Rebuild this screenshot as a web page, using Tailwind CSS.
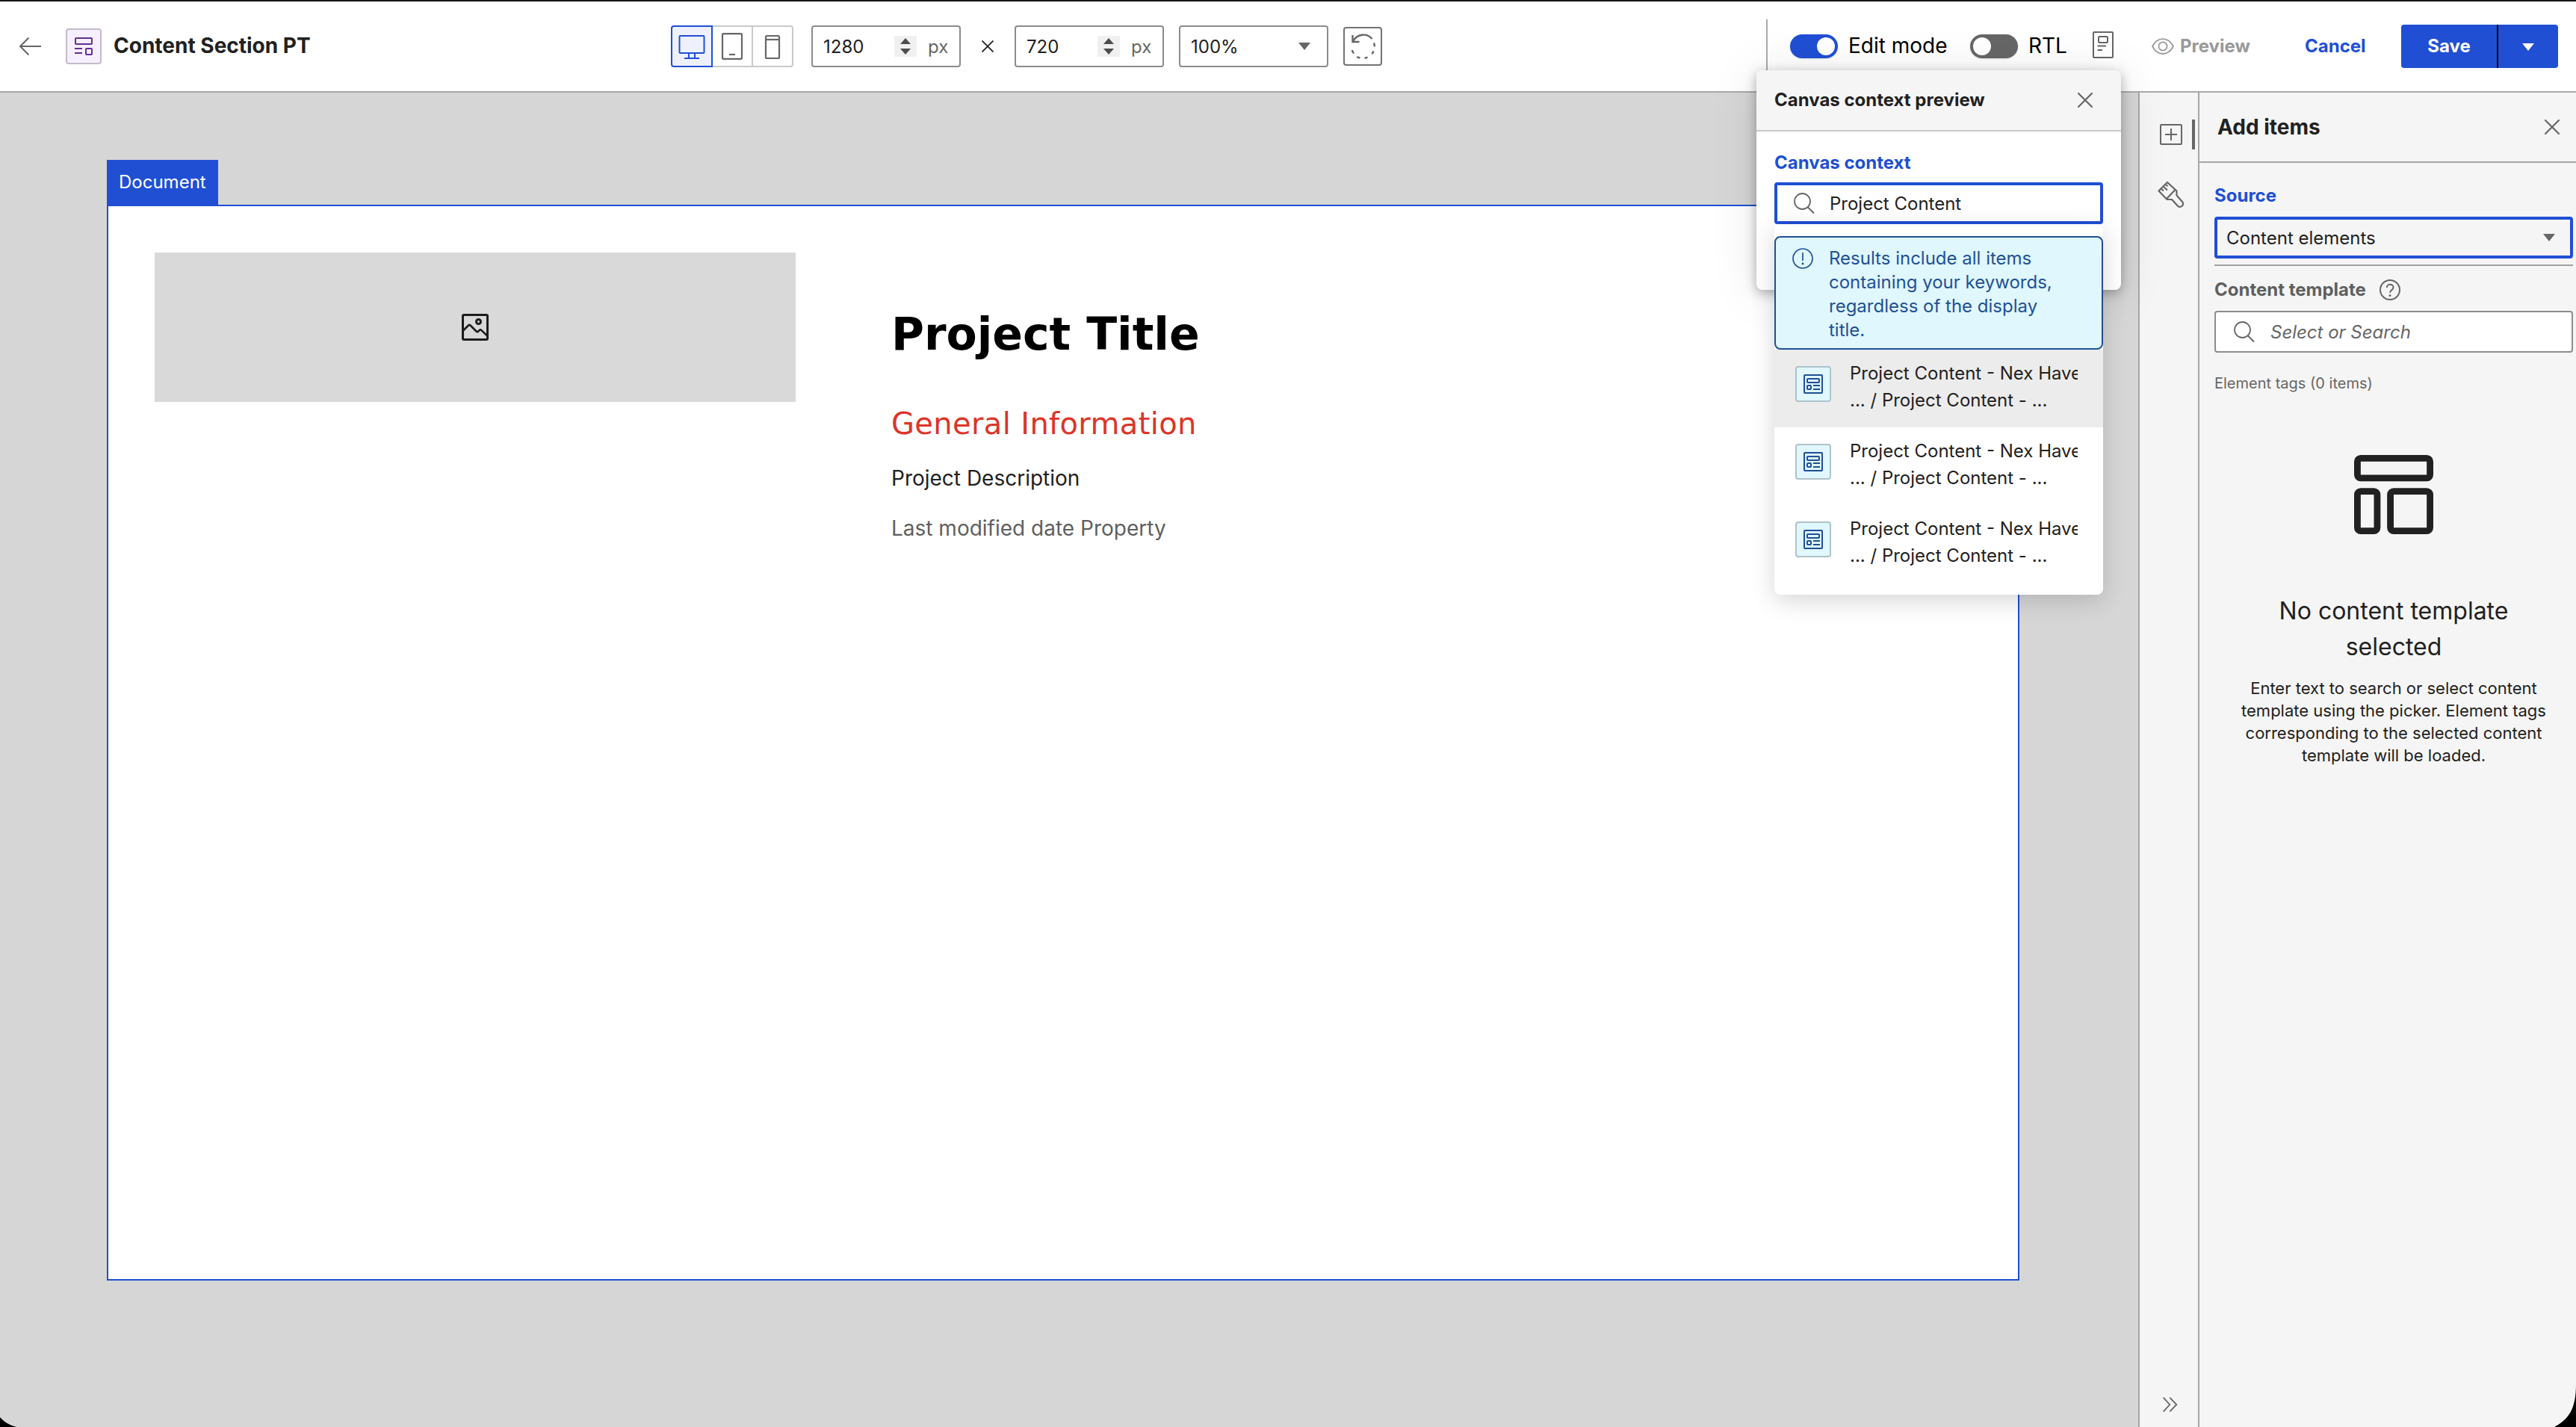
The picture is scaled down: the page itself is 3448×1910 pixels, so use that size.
<!DOCTYPE html>
<html lang="en">
<head>
    <meta charset="UTF-8">
    <meta name="viewport" content="width=device-width, initial-scale=1.0">
    <title>Content Section PT</title>
    <script src="https://cdn.jsdelivr.net/npm/@tailwindcss/browser@4"></script>
    <style>
        body {
            font-family: Inter, 'Liberation Sans', sans-serif;
        }
    </style>
</head>
<body class="relative w-[3448px] h-[1910px] overflow-hidden bg-[#d6d6d6] text-2xl text-[#212121]">

    <!-- Icons used more than once -->
    <svg class="hidden">
        <symbol id="search" viewBox="0 0 28 28">
            <circle cx="11.5" cy="11.5" r="10.5" fill="none" stroke="#666" stroke-width="1.8"/>
            <path d="M18.5 19l8.5 8.5" stroke="#666" stroke-width="2"/>
        </symbol>
        <symbol id="page" viewBox="0 0 26 26">
            <g fill="none" stroke="#1f5096" stroke-width="2">
                <rect x="1" y="1" width="24" height="24" rx="1"/>
                <rect x="5" y="6" width="16" height="5" rx="1"/>
                <rect x="5" y="15" width="5" height="5" rx="1"/>
                <path d="M13 15h9M13 20h9"/>
            </g>
        </symbol>
        <symbol id="spin" viewBox="0 0 30 28">
            <path d="M0 0h30v28H0z" fill="#f0f0f0"/>
            <path d="M15 3l7 8H8zM15 25l7-8H8z" fill="#4d4d4d"/>
        </symbol>
    </svg>

    <!-- Top bar -->
    <header class="flex items-center h-[124px] bg-white border-t-2 border-t-[#161416] border-b-2 border-b-[#a9a9a9]">
        <div class="flex items-center w-[898px] pl-[25px] shrink-0">
            <svg class="w-[30px] h-[26px]" viewBox="0 0 30 26" fill="none" stroke="#666" stroke-width="2"><path d="M1.5 13H30M13.5 1.5L2 13l11.5 11.5"/></svg>
            <div class="ml-[33px] size-12 flex items-center justify-center bg-[#f6effd] border-2 border-[#c4bacc] rounded">
                <svg class="size-6" viewBox="0 0 24 24" fill="none" stroke="#632f97" stroke-width="2">
                    <rect x="1" y="1" width="22" height="8" rx="1"/>
                    <path d="M0 15h10M0 21h10"/>
                    <rect x="15" y="15" width="8" height="8" rx="1"/>
                </svg>
            </div>
            <h1 class="ml-4 text-[28px] font-bold">Content Section PT</h1>
        </div>

        <div class="flex items-center w-[1466px] shrink-0">
            <div class="flex h-14">
                <div class="w-14 flex items-center justify-center bg-[#eef0fc] border-2 border-[#204fd4] rounded-l">
                    <svg class="size-9" viewBox="0 0 36 36" fill="none" stroke="#204fd4" stroke-width="2"><rect x="1.5" y="4" width="33" height="23" rx="1"/><path d="M14 27v7M22 27v7M8 34h20"/></svg>
                </div>
                <div class="w-[54px] flex items-center justify-center border-y-2 border-r-2 border-[#c9c9c9]">
                    <svg class="size-9" viewBox="0 0 36 36" fill="none" stroke="#666" stroke-width="2.2"><rect x="5" y="1.2" width="26" height="33.6" rx="1.5"/><path d="M14 29h8"/></svg>
                </div>
                <div class="w-[54px] flex items-center justify-center border-y-2 border-r-2 border-[#c9c9c9] rounded-r">
                    <svg class="size-9" viewBox="0 0 36 36" fill="none" stroke="#666" stroke-width="2.2"><rect x="9" y="4" width="18" height="30" rx="1.5"/><path d="M9 9h18"/></svg>
                </div>
            </div>
            <div class="ml-6 w-[200px] h-14 flex items-center border-2 border-[#8c8c8c] rounded">
                <span class="mt-0.5 ml-3.5 w-[95px]">1280</span>
                <svg class="w-[30px] h-7"><use href="#spin"/></svg>
                <span class="mt-0.5 ml-[15px] text-[#666]">px</span>
            </div>
            <svg class="ml-7 size-4" viewBox="0 0 16 16" stroke="#212121" stroke-width="1.8"><path d="M.5.5l15 15M15.5.5l-15 15"/></svg>
            <div class="ml-7 w-[200px] h-14 flex items-center border-2 border-[#8c8c8c] rounded">
                <span class="mt-0.5 ml-3.5 w-[95px]">720</span>
                <svg class="w-[30px] h-7"><use href="#spin"/></svg>
                <span class="mt-0.5 ml-[15px] text-[#666]">px</span>
            </div>
            <div class="ml-5 w-[200px] h-14 flex items-center justify-between pl-3.5 pr-[22px] border-2 border-[#8c8c8c] rounded">
                <span class="mt-0.5">100%</span>
                <svg class="w-4 h-2.5" viewBox="0 0 16 10"><path d="M0 0h16L8 10z" fill="#666"/></svg>
            </div>
            <div class="ml-5 size-[52px] flex items-center justify-center border-2 border-[#737373] rounded">
                <svg class="size-9" viewBox="0 0 36 36" fill="none" stroke="#666" stroke-width="2.4">
                    <path d="M5 11.5C10 1.5 23.5-.5 30.500 8"/>
                    <path d="M4.5 3v9h9"/>
                    <path d="M33 13.5q1 3 .8 5M32.5 24.5q-.8 2.2-2.2 3.8M24.5 32.5q-2 1-4 1.3M14.5 33.5q-2.3-.4-4.2-1.3M6 27.500q-1.5-2-2.2-4.5"/>
                </svg>
            </div>
        </div>

        <div class="w-0.5 h-[72px] bg-[#a9a9a9]"></div>
        <div class="ml-[30px] w-16 h-8 p-1 flex items-center justify-end bg-[#204fd4] rounded-full shadow-sm">
            <div class="size-6 bg-white rounded-full"></div>
        </div>
        <span class="ml-3.5 w-[163px] text-[28px] text-black">Edit mode</span>
        <div class="w-16 h-8 p-1 flex items-center bg-[#666] rounded-full shadow-sm">
            <div class="size-6 bg-white rounded-full"></div>
        </div>
        <span class="ml-3.5 w-[86px] text-[28px] text-black">RTL</span>
        <svg class="-mt-1 w-7 h-9" viewBox="0 0 28 36" fill="none" stroke="#666" stroke-width="2"><rect x="1" y="1" width="26" height="34" rx="1"/><rect x="8" y="7" width="12" height="8" rx="1"/><path d="M6.5 19.5h11.5M6.5 25h6.5"/></svg>
        <svg class="ml-[51px] w-[30px] h-[22px]" viewBox="0 0 30 22" fill="none" stroke="#999" stroke-width="1.8"><path d="M1 11C8-2.3 22-2.3 29 11 22 24.3 8 24.3 1 11z"/><circle cx="15" cy="11" r="5.6"/></svg>
        <span class="ml-2 w-[167px] font-bold text-[#999]">Preview</span>
        <span class="w-[129px] font-bold text-[#204fd4]">Cancel</span>
        <div class="flex h-[58px] bg-[#204fd4] rounded overflow-hidden">
            <div class="w-[128px] flex items-center justify-center font-bold text-white">Save</div>
            <div class="w-0.5 bg-black"></div>
            <div class="w-20 flex items-center justify-center">
                <svg class="mt-0.5 w-4 h-2.5" viewBox="0 0 16 10"><path d="M0 0h16L8 10z" fill="#fff"/></svg>
            </div>
        </div>
    </header>

    <main class="flex h-[1786px]">
        <!-- Canvas -->
        <section class="flex-1 pt-[90px] pl-[143px]">
            <div class="w-[149px] h-[60px] pl-4 flex items-center bg-[#204fd4] text-white">Document</div>
            <div class="w-[2560px] h-[1440px] flex items-start gap-32 p-[62px] bg-white border-2 border-[#204fd4]">
                <div class="w-[858px] h-[200px] flex items-center justify-center bg-[#d9d9d9]">
                    <svg class="size-9" viewBox="0 0 36 36" fill="none" stroke="#1c1c1c" stroke-width="3"><rect x="1.5" y="1.5" width="33" height="33" rx="1.5"/><path d="M2 22.5l7-7q1.3-1.3 2.6 0l8 8q1.3 1.3 2.6 0l1.6-1.6q1.2-1.2 2.4 0l7.8 7.3" stroke-width="2.6"/><circle cx="22.5" cy="10.5" r="3"/></svg>
                </div>
                <div class="pt-[73px]">
                    <h2 class="font-['DejaVu_Sans'] text-[60px] leading-[72px] font-bold text-black">Project Title</h2>
                    <h3 class="mt-[60px] font-['DejaVu_Sans'] text-[40px] leading-[48px] tracking-[0.36px] text-[#dc3529]">General Information</h3>
                    <p class="mt-8 text-[28px] leading-[34px]">Project Description</p>
                    <p class="mt-[33px] text-[28px] leading-[34px] text-[#5f5f5f]">Last modified date Property</p>
                </div>
            </div>
        </section>

        <!-- Icon rail -->
        <nav class="w-20 flex flex-col bg-[#f5f5f5] border-l-2 border-[#a6a6a6]">
            <div class="mt-9 pl-[27px] pr-1 h-10 flex items-center justify-between">
                <svg class="w-[30px] h-7" viewBox="0 0 30 28" fill="none" stroke="#666" stroke-width="2"><rect x="1" y="1" width="28" height="26" rx="1"/><path d="M15 6v16M7 14h16"/></svg>
                <div class="w-1 h-10 bg-[#666]"></div>
            </div>
            <svg class="mt-[42px] ml-6 size-9" viewBox="0 0 36 36" fill="none" stroke="#666" stroke-width="2.2" stroke-linejoin="round"><path d="M13 2L1.500 13.500l11 11.500H19l8.500 9.200q2.500 1.800 5.500-.7 2-2.800.2-5.300L25.500 19.500V13.500zM23.500 12L12.500 23.500M4.500 10.500l3.500 2.800M7.500 7.500l5.500 5M10.500 4.500l3 2.800"/></svg>
            <svg class="mt-auto mb-5 ml-[31px] size-5" viewBox="0 0 20 20" fill="none" stroke="#666" stroke-width="1.8"><path d="M.7.7l8.500 9.300-8.500 9.300M9.300.7l9 9.300-9 9.300"/></svg>
        </nav>

        <!-- Add items panel -->
        <aside class="w-[506px] bg-[#f5f5f5] border-l-2 border-[#a6a6a6]">
            <div class="h-[94px] pl-6 pr-[22px] flex items-center justify-between border-b-2 border-[#a6a6a6]">
                <h2 class="pt-0.5 text-[28px] font-bold">Add items</h2>
                <svg class="size-5" viewBox="0 0 20 20" stroke="#666" stroke-width="2.2" stroke-linecap="round"><path d="M1 1l18 18M19 1L1 19"/></svg>
            </div>
            <div class="pl-5 pr-1">
                <div class="mt-7 font-bold text-[#204fd4]">Source</div>
                <div class="mt-3 h-14 pl-3 pr-5 flex items-center justify-between border-4 border-[#204fd4] rounded">
                    <span class="mt-0.5">Content elements</span>
                    <svg class="w-4 h-2.5" viewBox="0 0 16 10"><path d="M0 0h16L8 10z" fill="#666"/></svg>
                </div>
                <div class="mt-2 h-0.5 bg-[#a0a0a0]"></div>
                <div class="mt-4 h-8 flex items-center font-bold text-[#5f5f5f]">
                    Content template
                    <svg class="ml-[18px] size-7" viewBox="0 0 28 28" fill="none" stroke="#666" stroke-width="2"><circle cx="14" cy="14" r="13"/><path d="M9.8 11C9.8 5.5 18.5 5.5 18.5 10.8c0 3.4-4.5 3.2-4.5 7"/><circle cx="14" cy="21.5" r="1.5" fill="#666" stroke="none"/></svg>
                </div>
                <div class="mt-3 h-14 pl-6 flex items-center bg-white border-2 border-[#8c8c8c] rounded">
                    <svg class="size-7"><use href="#search"/></svg>
                    <span class="mt-0.5 ml-[21px] italic text-[#666]">Select or Search</span>
                </div>
                <div class="mt-[27px] text-xl leading-7 text-[#666]">Element tags (0 items)</div>
                <svg class="mt-[82px] mx-auto size-[106px]" viewBox="0 0 12 12" fill="none" stroke="#212121"><rect x=".5" y=".5" width="11" height="3" rx=".5"/><rect x=".5" y="5.5" width="3" height="6" rx=".5"/><rect x="5.5" y="5.5" width="6" height="6" rx=".5"/></svg>
                <h3 class="mt-[79px] px-14 text-[32px] leading-[48px] text-center">No content template selected</h3>
                <p class="mt-4 px-4 text-[22px] leading-[30px] text-center">Enter text to search or select content template using the picker. Element tags corresponding to the selected content template will be loaded.</p>
            </div>
        </aside>
    </main>

    <!-- Canvas context popover -->
    <div class="absolute left-[2351px] top-[94px] w-[488px] h-[294px] bg-white rounded-lg shadow-[0_4px_16px_rgba(0,0,0,0.3),0_4px_64px_rgba(0,0,0,0.1)]">
        <div class="h-[82px] pl-6 pr-[38px] flex items-center justify-between bg-[#f5f5f5] border-b-2 border-[#c9c9c9] rounded-t-lg">
            <span class="font-bold">Canvas context preview</span>
            <svg class="size-5" viewBox="0 0 20 20" stroke="#666" stroke-width="2.2" stroke-linecap="round"><path d="M1 1l18 18M19 1L1 19"/></svg>
        </div>
        <div class="px-6">
            <div class="mt-[26px] font-bold text-[#204fd4]">Canvas context</div>
            <div class="mt-2.5 h-14 pl-[22px] flex items-center border-4 border-[#204fd4] rounded">
                <svg class="size-7"><use href="#search"/></svg>
                <span class="mt-0.5 ml-5">Project Content</span>
            </div>
        </div>
    </div>

    <!-- Search results -->
    <div class="absolute left-[2375px] top-[300px] w-[440px] h-[496px] pt-4 bg-white rounded-lg shadow-[0_8px_32px_rgba(0,0,0,0.16)]">
        <div class="h-[152px] pl-[22px] pt-3 flex items-start bg-[#dff7fd] border-2 border-[#1f5096] rounded-lg text-[#1f5096]">
            <svg class="mt-0.5 size-7 shrink-0" viewBox="0 0 28 28" fill="none" stroke="#1f5096" stroke-width="1.7"><circle cx="14" cy="14" r="13"/><path d="M14 6v11"/><circle cx="14" cy="21" r="1.4" fill="#1f5096" stroke="none"/></svg>
            <p class="ml-[21px] w-[310px]">Results include all items containing your keywords, regardless of the display title.</p>
        </div>
        <div class="h-[104px] pl-7 flex items-start bg-[#ececec]">
            <div class="mt-[22px] size-12 flex items-center justify-center bg-[#dff7fd] border-2 border-[#aec3c9] rounded">
                <svg class="size-[26px]"><use href="#page"/></svg>
            </div>
            <div class="mt-3.5 ml-[25px] w-[305px] leading-9 whitespace-nowrap overflow-hidden">Project Content - Nex Haven<br>... / Project Content - ...</div>
        </div>
        <div class="h-[104px] pl-7 flex items-start">
            <div class="mt-[22px] size-12 flex items-center justify-center bg-[#dff7fd] border-2 border-[#aec3c9] rounded">
                <svg class="size-[26px]"><use href="#page"/></svg>
            </div>
            <div class="mt-3.5 ml-[25px] w-[305px] leading-9 whitespace-nowrap overflow-hidden">Project Content - Nex Haven<br>... / Project Content - ...</div>
        </div>
        <div class="h-[104px] pl-7 flex items-start">
            <div class="mt-[22px] size-12 flex items-center justify-center bg-[#dff7fd] border-2 border-[#aec3c9] rounded">
                <svg class="size-[26px]"><use href="#page"/></svg>
            </div>
            <div class="mt-3.5 ml-[25px] w-[305px] leading-9 whitespace-nowrap overflow-hidden">Project Content - Nex Haven<br>... / Project Content - ...</div>
        </div>
    </div>

    <!-- Rounded window corners -->
    <svg class="absolute left-0 bottom-0 w-6 h-4" viewBox="0 0 24 16"><path d="M0 3Q9 13 22 16H0z" fill="#000"/></svg>
    <svg class="absolute right-0 bottom-0 w-8 h-[60px]" viewBox="0 0 32 60"><path d="M32 3C32 36 22 50 3 60h29z" fill="#000"/></svg>

</body>
</html>
